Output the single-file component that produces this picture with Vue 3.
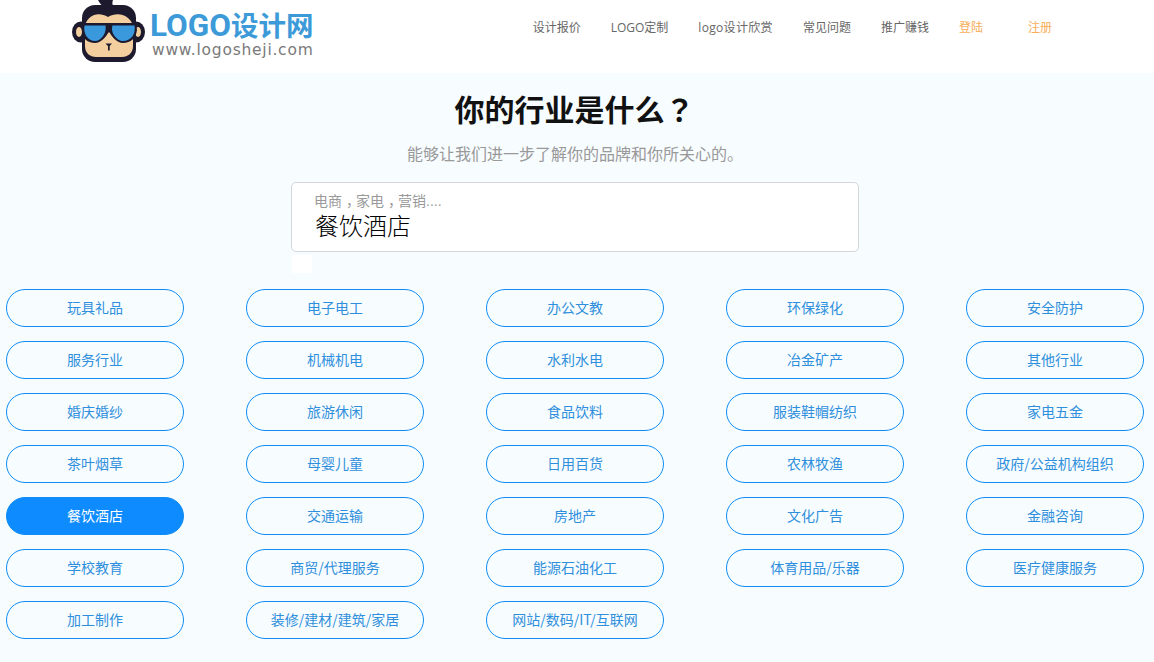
<script setup>
const navs = ['设计报价', 'LOGO定制', 'logo设计欣赏', '常见问题', '推广赚钱']
const items = [
  '玩具礼品', '电子电工', '办公文教', '环保绿化', '安全防护',
  '服务行业', '机械机电', '水利水电', '冶金矿产', '其他行业',
  '婚庆婚纱', '旅游休闲', '食品饮料', '服装鞋帽纺织', '家电五金',
  '茶叶烟草', '母婴儿童', '日用百货', '农林牧渔', '政府/公益机构组织',
  '餐饮酒店', '交通运输', '房地产', '文化广告', '金融咨询',
  '学校教育', '商贸/代理服务', '能源石油化工', '体育用品/乐器', '医疗健康服务',
  '加工制作', '装修/建材/建筑/家居', '网站/数码/IT/互联网'
]
</script>

<template>
  <div class="page">
    <header class="top">
      <div class="logo">
        <svg class="mark" width="76" height="64" viewBox="0 0 76 64">
          <path d="M27 0 C29 4 32 7 35 8 L44 8 C41 5 41 3 42 0 Z" fill="#1d1a2e" />
          <ellipse cx="10" cy="32" rx="9" ry="10.5" fill="#1d1a2e" />
          <ellipse cx="65" cy="32" rx="9" ry="10.5" fill="#1d1a2e" />
          <ellipse cx="8" cy="32" rx="3" ry="5" fill="#f3cfa0" />
          <ellipse cx="67" cy="32" rx="3" ry="5" fill="#f3cfa0" />
          <rect x="11" y="5" width="54" height="57" rx="13" fill="#1d1a2e" />
          <path d="M14 28 C14 17 26 10 37 17 C48 10 62 17 62 28 L62 46 C62 53 57 57 51 57 L25 57 C19 57 14 53 14 46 Z" fill="#f3cfa0" />
          <path d="M11 23 L65 23 L66 30 C65 38 60 43 52 43 C45 43 41 36 38 32 C35 36 31 43 24 43 C16 43 11 38 11 30 Z" fill="#1d1a2e" />
          <path d="M13.5 25.5 L34.5 25.5 C36 33 30 41 24 41 C17 41 12 34 13.5 25.5 Z" fill="#3a98dc" />
          <path d="M41.5 25.5 L63.5 25.5 C65 34 60 41 52 41 C46 41 39 33 41.5 25.5 Z" fill="#3a98dc" />
          <path d="M34.5 43.5 L41 43.5 L38.7 46 L38.7 50.5 L37 50.5 L37 46 Z" fill="#1d1a2e" />
        </svg>
        <div class="brand">
          <div class="brand-name"><span class="latin">LOGO</span>设计网</div>
          <div class="brand-url">www.logosheji.com</div>
        </div>
      </div>
      <nav class="nav">
        <a v-for="n in navs" :key="n" class="nav-link" :class="{ wide: n.startsWith('logo') }">{{ n }}</a>
        <a class="nav-link orange login">登陆</a>
        <a class="nav-link orange">注册</a>
      </nav>
    </header>

    <main class="main">
      <h1 class="title">你的行业是什么<span class="tc">？</span></h1>
      <p class="sub">能够让我们进一步了解你的品牌和你所关心的。</p>
      <div class="field">
        <div class="hint">电商<span class="comma">，</span>家电<span class="comma">，</span>营销....</div>
        <div class="value">餐饮酒店</div>
      </div>
      <div class="chip"></div>
      <div class="grid">
        <div v-for="i in items" :key="i" class="pill" :class="{ on: i === '餐饮酒店' }">{{ i }}</div>
      </div>
    </main>
  </div>
</template>

<style>
html, body { margin: 0; background: #f7fcff; }
</style>

<style scoped>
.page {
  width: 1154px;
  height: 662px;
  overflow: hidden;
  background: #f7fcff;
  font-family: "Open Sans", "Noto Sans CJK SC", sans-serif;
}
.top {
  height: 73px;
  background: #fff;
  display: flex;
  justify-content: space-between;
  overflow: hidden;
}
.logo {
  display: flex;
  margin-left: 71px;
}
.mark { display: block; flex: none; }
.brand { margin-left: 3px; }
.brand-name {
  margin-top: 10px;
  height: 31px;
  font-family: "Liberation Sans", "Noto Sans CJK SC", sans-serif;
  font-weight: 700;
  font-size: 27.5px;
  line-height: 31px;
  color: #3d9ad9;
  white-space: nowrap;
}
.latin {
  font-family: "Roboto", sans-serif;
  font-size: 31.5px;
}
.brand-url {
  margin-left: 2px;
  font-family: "DejaVu Sans", sans-serif;
  font-size: 15.5px;
  line-height: 18px;
  letter-spacing: 0.75px;
  color: #7a7a7a;
  white-space: nowrap;
}
.nav {
  display: flex;
  gap: 30px;
  margin-right: 102px;
  padding-top: 19px;
}
.nav-link {
  font-family: "Open Sans", "Noto Sans CJK SC", sans-serif;
  font-size: 12px;
  line-height: 17px;
  color: #666;
  white-space: nowrap;
}
.wide { letter-spacing: 0.33px; }
.orange { color: #f6ae58; }
.login { margin-right: 15px; }
.main {
  display: flex;
  flex-direction: column;
  align-items: center;
}
.title {
  margin: 15px 0 0;
  width: 100%;
  text-align: center;
  font-family: "Noto Sans CJK SC", sans-serif;
  font-size: 30px;
  line-height: 40px;
  font-weight: 700;
  color: #111;
  padding-right: 5px;
  box-sizing: border-box;
}
.tc { font-family: "Noto Sans CJK TC", sans-serif; }
.sub {
  margin: 14px 0 0;
  font-family: "Noto Sans CJK SC", sans-serif;
  font-size: 16px;
  line-height: 22px;
  color: #999;
  padding-right: 4px;
}
.field {
  margin-top: 18px;
  width: 568px;
  height: 70px;
  box-sizing: border-box;
  background: #fff;
  border: 1px solid #d3d6da;
  border-radius: 5px;
  padding: 10px 22px 0;
  margin-right: 4px;
}
.hint {
  font-family: "Liberation Sans", "Noto Sans CJK SC", sans-serif;
  font-size: 14px;
  line-height: 17px;
  color: #999;
}
.comma {
  padding-left: 4px;
  letter-spacing: -4px;
}
.value {
  margin-top: 1px;
  font-family: "Liberation Sans", "Noto Sans CJK SC", sans-serif;
  font-size: 24px;
  line-height: 32px;
  font-weight: 300;
  color: #000;
  padding-left: 1px;
}
.chip {
  align-self: flex-start;
  margin: 3px 0 0 292px;
  width: 20px;
  height: 18px;
  background: #fff;
}
.grid {
  align-self: flex-start;
  margin: 16px 0 0 6px;
  display: grid;
  grid-template-columns: repeat(5, 178px);
  column-gap: 62px;
  row-gap: 14px;
}
.pill {
  height: 38px;
  box-sizing: border-box;
  border: 1px solid #0f8cf5;
  border-radius: 19px;
  padding-bottom: 2px;
  display: flex;
  align-items: center;
  justify-content: center;
  font-family: "Noto Sans CJK SC", sans-serif;
  font-size: 14px;
  color: #2f8fdc;
  white-space: nowrap;
}
.pill.on {
  background: #0d8bff;
  color: #fff;
}
</style>
